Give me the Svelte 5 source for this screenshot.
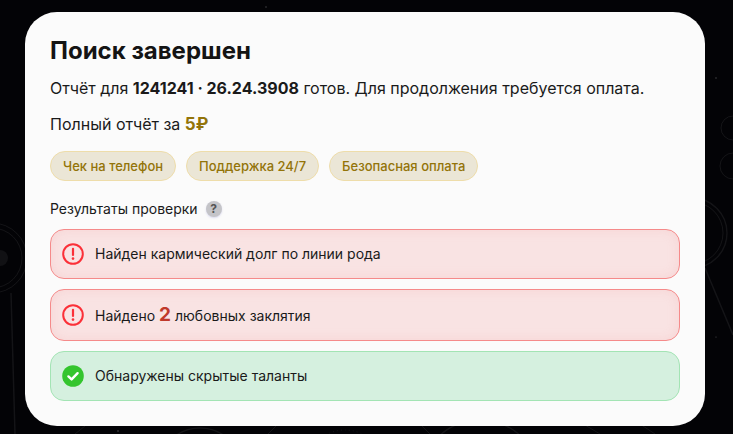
<script lang="ts">
const chips = ["Чек на телефон", "Поддержка 24/7", "Безопасная оплата"];
</script>

<div class="page">
  <!-- faint astrological chart behind the card -->
  <svg class="backdrop" width="733" height="434" viewBox="0 0 733 434" fill="none" stroke="#fff">
    <g stroke-opacity="0.07">
      <circle cx="-8" cy="258" r="35" />
      <circle cx="-8" cy="258" r="30" />
      <circle cx="692" cy="233" r="35" stroke-width="1.4" />
      <circle cx="692" cy="233" r="31" />
      <circle cx="733" cy="128" r="12" />
      <circle cx="733" cy="166" r="13" />
      <circle cx="200" cy="470" r="42" stroke-width="1.4" />
      <circle cx="480" cy="480" r="60" stroke-width="1.4" />
      <circle cx="345" cy="470" r="40" stroke-dasharray="1 3" />
      <path d="M11 293 L15 434" stroke-width="1.5" />
      <path d="M705 268 L733 335" stroke-width="1.5" />
      <path d="M75 434 L90 422 M268 434 L278 424 M420 424 L430 434 M580 422 L600 434 M640 424 L655 434" />
    </g>
    <circle cx="0" cy="258" r="8" fill="#fff" fill-opacity="0.06" stroke="none" />
    <g fill="#fff" stroke="none" fill-opacity="0.3">
      <circle cx="266" cy="7" r="0.7" />
      <circle cx="118" cy="431" r="0.8" />
      <circle cx="716" cy="78" r="0.7" />
      <circle cx="716" cy="337" r="0.6" />
    </g>
  </svg>

  <section class="card">
    <h1>Поиск завершен</h1>
    <p class="lead">Отчёт для <b>1241241 · 26.24.3908</b> готов. Для продолжения требуется оплата.</p>
    <p class="price">Полный отчёт за <b>5₽</b></p>

    <div class="chips">
      {#each chips as chip}
        <span class="chip">{chip}</span>
      {/each}
    </div>

    <div class="results-title">
      <span>Результаты проверки</span>
      <span class="hint">?</span>
    </div>

    <div class="results">
      <div class="result bad">
        <svg class="icon" width="22" height="22" viewBox="0 0 22 22" fill="none">
          <circle cx="11" cy="11" r="9.8" stroke="#fb3038" stroke-width="2" />
          <path d="M11 5.8V12" stroke="#fb3038" stroke-width="2.2" stroke-linecap="round" />
          <circle cx="11" cy="15.6" r="1.3" fill="#fb3038" />
        </svg>
        <span>Найден кармический долг по линии рода</span>
      </div>
      <div class="result bad">
        <svg class="icon" width="22" height="22" viewBox="0 0 22 22" fill="none">
          <circle cx="11" cy="11" r="9.8" stroke="#fb3038" stroke-width="2" />
          <path d="M11 5.8V12" stroke="#fb3038" stroke-width="2.2" stroke-linecap="round" />
          <circle cx="11" cy="15.6" r="1.3" fill="#fb3038" />
        </svg>
        <span>Найдено <b class="count">2</b> любовных заклятия</span>
      </div>
      <div class="result good">
        <svg class="icon" width="22" height="22" viewBox="0 0 22 22" fill="none">
          <circle cx="11" cy="11" r="10.8" fill="#34c52e" />
          <path d="M6.4 11.4L9.6 14.4L15.6 8.2" stroke="#fff" stroke-width="2.4" stroke-linecap="round" stroke-linejoin="round" />
        </svg>
        <span>Обнаружены скрытые таланты</span>
      </div>
    </div>
  </section>
</div>

<style>
:global(body) {
  margin: 0;
  background: #030306;
}

.page {
  position: relative;
  box-sizing: border-box;
  width: 733px;
  height: 434px;
  padding: 12px 28px 8px 25px;
  overflow: hidden;
  background: #030306;
  font-family: Inter, "Liberation Sans", sans-serif;
}

.backdrop {
  position: absolute;
  top: 0;
  left: 0;
}

.card {
  position: relative;
  box-sizing: border-box;
  height: 414px;
  padding: 24px 25px 25px;
  border-radius: 32px;
  background: #fbfbfb;
  color: #1a1a1a;
}

h1 {
  margin: 0;
  font-size: 24px;
  line-height: 30px;
  font-weight: 700;
  color: #141414;
}

.lead {
  margin: 10px 0 0;
  font-size: 16px;
  line-height: 24px;
}

.lead b {
  font-weight: 700;
}

.price {
  margin: 12px 0 0;
  font-size: 16px;
  line-height: 24px;
}

.price b {
  font-size: 17px;
  font-weight: 700;
  color: #937409;
}

.chips {
  display: flex;
  gap: 10px;
  margin-top: 15px;
}

.chip {
  box-sizing: border-box;
  height: 30px;
  padding: 0 12px;
  border: 1px solid #eeddaa;
  border-radius: 15px;
  background: #ebe6d6;
  color: #937409;
  font-size: 13px;
  font-weight: 500;
  line-height: 28px;
}

.results-title {
  display: flex;
  align-items: center;
  gap: 8px;
  margin-top: 18px;
  font-size: 14px;
  line-height: 20px;
}

.hint {
  width: 16px;
  height: 16px;
  border-radius: 50%;
  background: #c4c4c8;
  box-shadow: 0 1px 2px rgba(120, 120, 200, 0.25);
  color: #555;
  font-size: 12px;
  font-weight: 700;
  line-height: 16px;
  text-align: center;
}

.results {
  display: flex;
  flex-direction: column;
  gap: 10px;
  margin-top: 10px;
}

.result {
  display: flex;
  align-items: center;
  gap: 11px;
  box-sizing: border-box;
  padding: 14px 11px;
  border: 1px solid;
  border-radius: 14px;
  font-size: 14px;
  line-height: 20px;
}

.icon {
  flex: none;
  margin: -1px 0;
}

.bad {
  border-color: #f58a8a;
  background: #f9e3e3;
  box-shadow: inset 0 0 12px rgba(245, 160, 160, 0.22);
}

.good {
  border-color: #a3e4b4;
  background: #d5f0df;
}

.count {
  font-size: 19px;
  line-height: 22px;
  font-weight: 700;
  color: #c0392b;
}
</style>
